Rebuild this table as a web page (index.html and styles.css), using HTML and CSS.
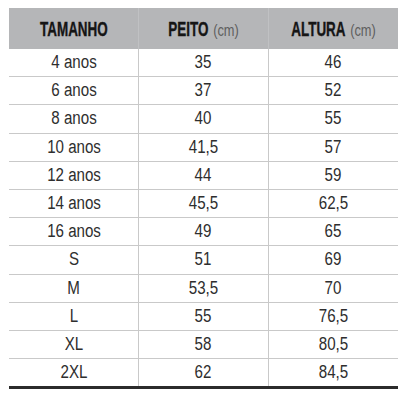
FILE: index.html
```html
<!DOCTYPE html>
<html lang="pt">
<head>
<meta charset="utf-8">
<title>Tabela de medidas</title>
<link rel="stylesheet" href="styles.css">
</head>
<body>
<table class="sizes">
  <thead>
    <tr>
      <th><span class="hd hd-tam">TAMANHO</span></th>
      <th><span class="hd hd-pei">PEITO</span> <span class="unit">(cm)</span></th>
      <th><span class="hd hd-alt">ALTURA</span> <span class="unit">(cm)</span></th>
    </tr>
  </thead>
  <tbody>
    <tr><td><span class="v">4 anos</span></td><td><span class="v">35</span></td><td><span class="v">46</span></td></tr>
    <tr><td><span class="v">6 anos</span></td><td><span class="v">37</span></td><td><span class="v">52</span></td></tr>
    <tr><td><span class="v">8 anos</span></td><td><span class="v">40</span></td><td><span class="v">55</span></td></tr>
    <tr><td><span class="v">10 anos</span></td><td><span class="v">41,5</span></td><td><span class="v">57</span></td></tr>
    <tr><td><span class="v">12 anos</span></td><td><span class="v">44</span></td><td><span class="v">59</span></td></tr>
    <tr><td><span class="v">14 anos</span></td><td><span class="v">45,5</span></td><td><span class="v">62,5</span></td></tr>
    <tr><td><span class="v">16 anos</span></td><td><span class="v">49</span></td><td><span class="v">65</span></td></tr>
    <tr><td><span class="v">S</span></td><td><span class="v">51</span></td><td><span class="v">69</span></td></tr>
    <tr><td><span class="v">M</span></td><td><span class="v">53,5</span></td><td><span class="v">70</span></td></tr>
    <tr><td><span class="v">L</span></td><td><span class="v">55</span></td><td><span class="v">76,5</span></td></tr>
    <tr><td><span class="v">XL</span></td><td><span class="v">58</span></td><td><span class="v">80,5</span></td></tr>
    <tr><td><span class="v">2XL</span></td><td><span class="v">62</span></td><td><span class="v">84,5</span></td></tr>
  </tbody>
</table>
</body>
</html>
```
FILE: styles.css
```css
html, body {
  margin: 0;
  background: #ffffff;
}
body {
  padding: 8px 12px 0 9px;
  font-family: "Liberation Sans", Arial, sans-serif;
}
.sizes {
  width: 389px;
  border-collapse: collapse;
  table-layout: fixed;
  border-bottom: 3px solid #2b2b2b;
}
.sizes th {
  height: 41px;
  padding: 0;
  background: #b5b6b8;
  border-left: 1px solid #c0c1c3;
  text-align: center;
  vertical-align: middle;
  white-space: nowrap;
  font-weight: 400;
  font-size: 16px;
}
.sizes th:first-child { border-left: none; }
.hd {
  display: inline-block;
  font-size: 21px;
  font-weight: 700;
  color: #151515;
  transform: scaleX(0.64);
  -webkit-text-stroke: 0.4px #151515;
}
.hd-tam { margin: 0 -19px; }
.hd-pei { margin: 0 -11px; }
.hd-alt { margin: 0 -15.5px; }
.unit {
  display: inline-block;
  font-size: 16px;
  font-weight: 400;
  color: #5e5e5e;
  transform: scaleX(0.8);
  margin: 0 -3px;
}
.sizes td {
  height: 27.2px;
  padding: 0;
  text-align: center;
  vertical-align: middle;
  border-top: 1px solid #c9c9c9;
  border-left: 1px solid #c9c9c9;
}
.v {
  display: inline-block;
  font-size: 18px;
  color: #2e2e2e;
  transform: scaleX(0.84);
}
.sizes tbody tr:first-child td { border-top: none; }
.sizes td:first-child { border-left: none; }
```
